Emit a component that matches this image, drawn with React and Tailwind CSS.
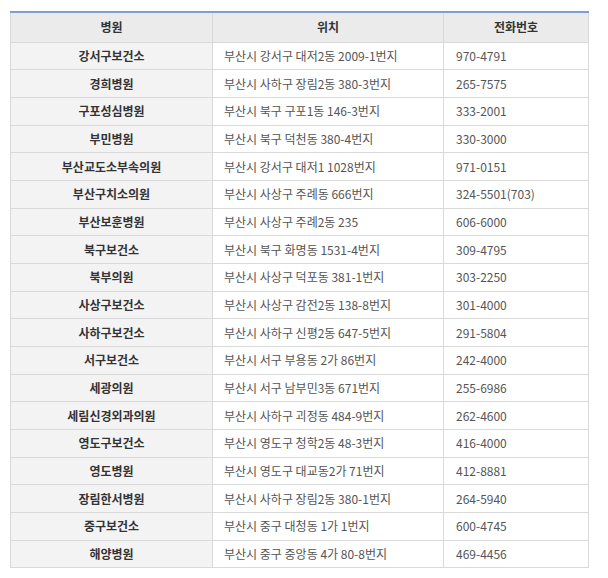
// 부산 지역 병원 목록 표
import React from 'react'

const HOSPITALS = [
  { name: '강서구보건소', addr: '부산시 강서구 대저2동 2009-1번지', tel: '970-4791' },
  { name: '경희병원', addr: '부산시 사하구 장림2동 380-3번지', tel: '265-7575' },
  { name: '구포성심병원', addr: '부산시 북구 구포1동 146-3번지', tel: '333-2001' },
  { name: '부민병원', addr: '부산시 북구 덕천동 380-4번지', tel: '330-3000' },
  { name: '부산교도소부속의원', addr: '부산시 강서구 대저1 1028번지', tel: '971-0151' },
  { name: '부산구치소의원', addr: '부산시 사상구 주례동 666번지', tel: '324-5501(703)' },
  { name: '부산보훈병원', addr: '부산시 사상구 주례2동 235', tel: '606-6000' },
  { name: '북구보건소', addr: '부산시 북구 화명동 1531-4번지', tel: '309-4795' },
  { name: '북부의원', addr: '부산시 사상구 덕포동 381-1번지', tel: '303-2250' },
  { name: '사상구보건소', addr: '부산시 사상구 감전2동 138-8번지', tel: '301-4000' },
  { name: '사하구보건소', addr: '부산시 사하구 신평2동 647-5번지', tel: '291-5804' },
  { name: '서구보건소', addr: '부산시 서구 부용동 2가 86번지', tel: '242-4000' },
  { name: '세광의원', addr: '부산시 서구 남부민3동 671번지', tel: '255-6986' },
  { name: '세림신경외과의원', addr: '부산시 사하구 괴정동 484-9번지', tel: '262-4600' },
  { name: '영도구보건소', addr: '부산시 영도구 청학2동 48-3번지', tel: '416-4000' },
  { name: '영도병원', addr: '부산시 영도구 대교동2가 71번지', tel: '412-8881' },
  { name: '장림한서병원', addr: '부산시 사하구 장림2동 380-1번지', tel: '264-5940' },
  { name: '중구보건소', addr: '부산시 중구 대청동 1가 1번지', tel: '600-4745' },
  { name: '해양병원', addr: '부산시 중구 중앙동 4가 80-8번지', tel: '469-4456' },
]

export default function App() {
  return (
    <div
      className="w-[608px] h-[578px] bg-white pt-[11px] pl-[10px]"
      style={{ fontFamily: "'Noto Sans CJK KR', 'Noto Sans', sans-serif" }}
    >
      <table className="w-[578px] table-fixed border-collapse text-[12px]">
        <colgroup>
          <col className="w-[202px]" />
          <col className="w-[231px]" />
          <col className="w-[145px]" />
        </colgroup>
        <thead>
          <tr className="h-[30px]">
            {['병원', '위치', '전화번호'].map(h => (
              <th
                key={h}
                className="bg-[#ebebeb] border border-[#d9d9d9] border-t-2 border-t-[#7f9fcf] text-center font-bold text-[#333] p-0 leading-none"
              >
                {h}
              </th>
            ))}
          </tr>
        </thead>
        <tbody>
          {HOSPITALS.map(h => (
            <tr key={h.name} className="h-[27.68px]">
              <td className="bg-[#f3f3f3] border border-[#d9d9d9] text-center font-bold text-[#333] p-0 leading-none">
                {h.name}
              </td>
              <td className="border border-[#d9d9d9] pl-[11px] text-[#555] p-0 leading-none">
                {h.addr}
              </td>
              <td className="border border-[#d9d9d9] pl-[12px] text-[#555] p-0 leading-none">
                {h.tel}
              </td>
            </tr>
          ))}
        </tbody>
      </table>
    </div>
  )
}
